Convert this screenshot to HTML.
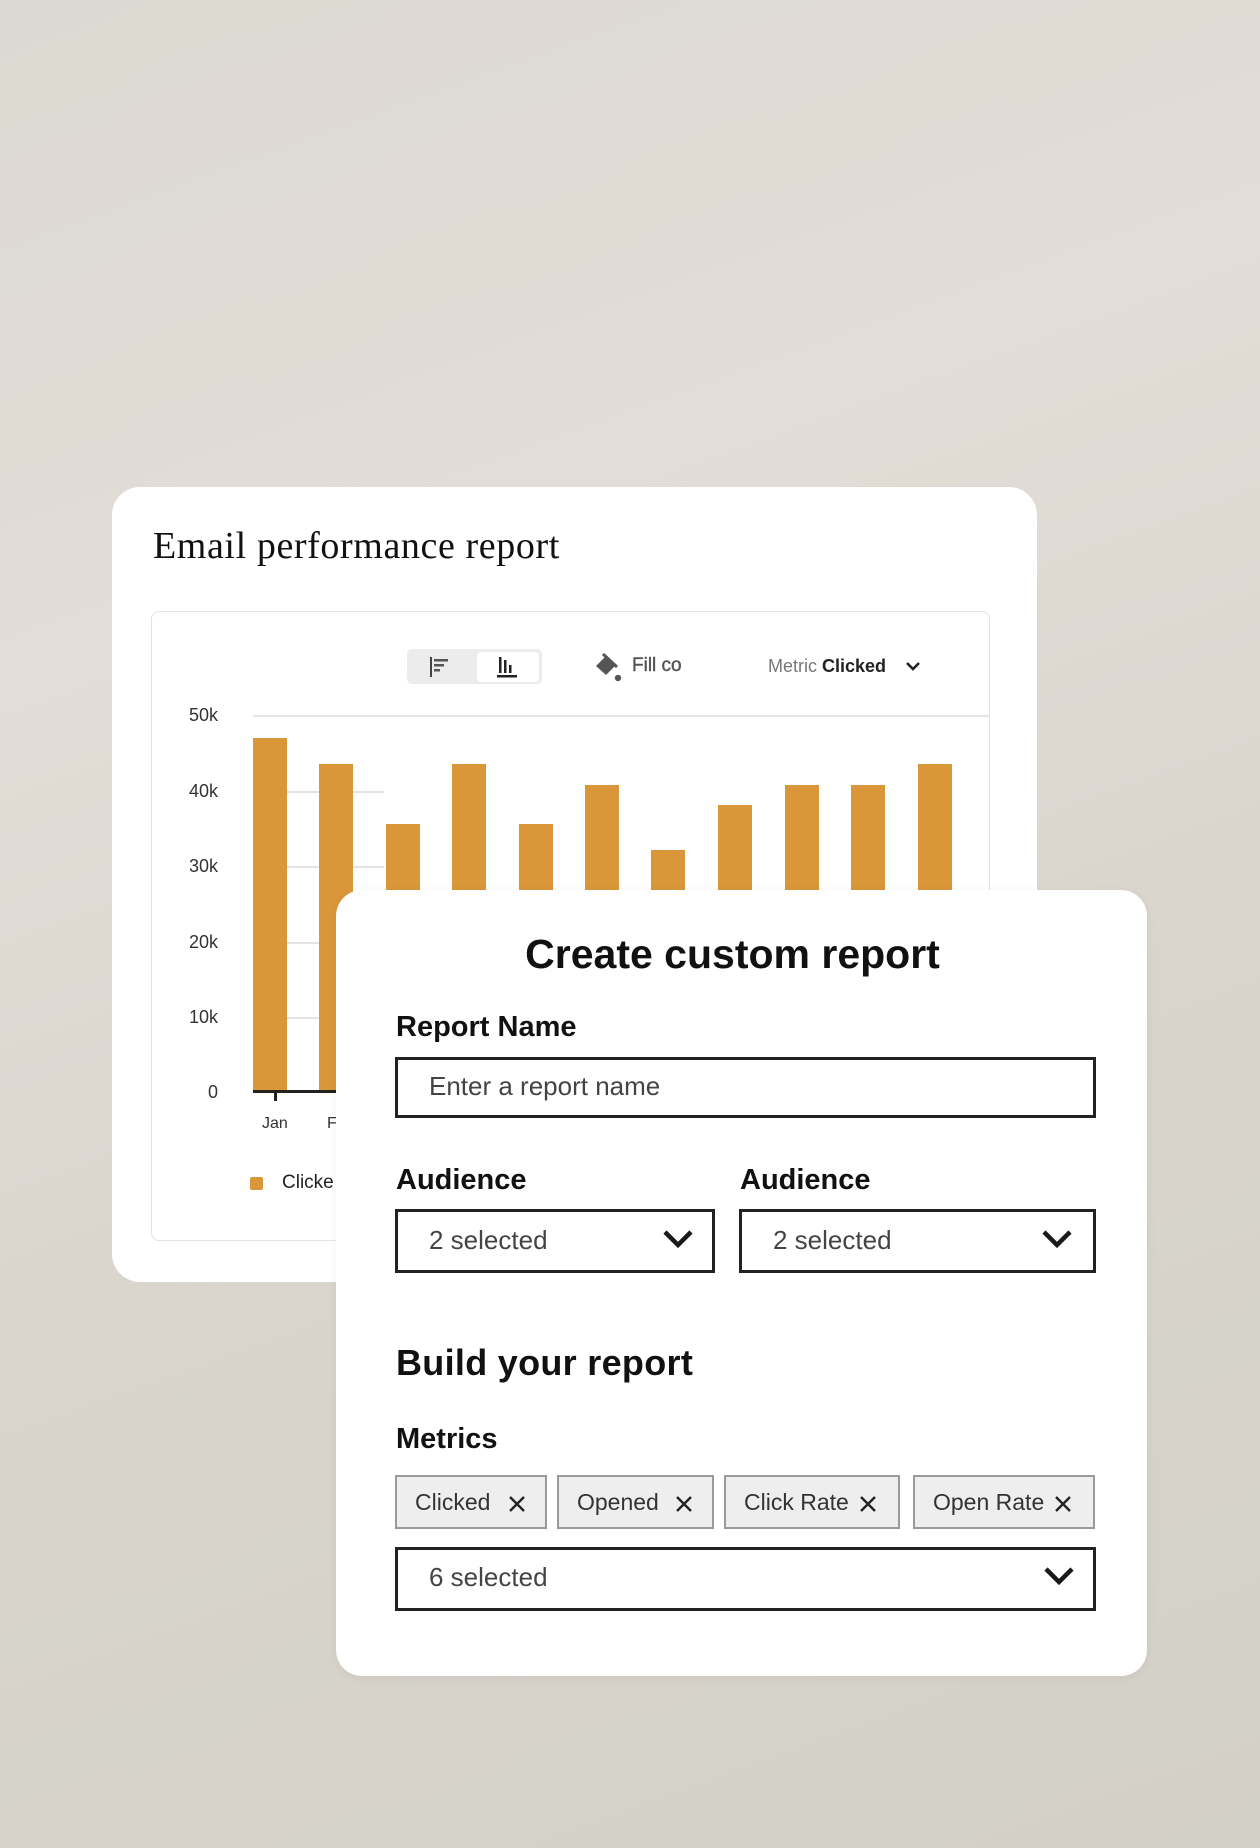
<!DOCTYPE html>
<html><head><meta charset="utf-8">
<style>
*{margin:0;padding:0;box-sizing:border-box}
html,body{width:1260px;height:1848px;overflow:hidden}
body{position:relative;font-family:"Liberation Sans",sans-serif;background:linear-gradient(160deg,#dcd9d2 0%,#e2ddd6 30%,#d9d5cd 60%,#d3d0c7 100%);color:#111}
.a{position:absolute}
.card1{left:112px;top:487px;width:925px;height:795px;background:#fff;border-radius:28px}
.inner{left:151px;top:611px;width:839px;height:630px;border:1.5px solid #e2e2e2;border-radius:8px}
.grid{height:1.5px;background:#e4e4e4}
.bar{background:#d9973a;width:34px}
.yl{font-size:18px;color:#333;width:40px;text-align:right;left:178px}
.card2{left:336px;top:890px;width:811px;height:786px;background:#fff;border-radius:26px;box-shadow:0 2px 10px rgba(0,0,0,.05)}
.lbl{font-weight:bold;font-size:29px;color:#111}
.box{border:3px solid #222;background:#fff}
.ph{font-size:26px;color:#444}
.chip{top:1475px;height:54px;background:#eeeeee;border:2px solid #9a9a9a;font-size:23px;color:#333;line-height:50px;padding-left:18px}
.chip svg{position:absolute;top:17px}
</style></head><body>
<div class="a card1"></div>
<div class="a" style="left:153px;top:524px;font-family:'Liberation Serif',serif;font-size:38px;letter-spacing:0.6px;color:#111">Email performance report</div>
<div class="a inner"></div>
<!-- toolbar -->
<div class="a" style="left:407px;top:649px;width:135px;height:35px;background:#ececec;border-radius:5px"></div>
<div class="a" style="left:477px;top:652px;width:62px;height:30px;background:#fff;border-radius:4px"></div>
<svg class="a" style="left:428px;top:656px" width="24" height="22"><rect x="2" y="1" width="2" height="20" fill="#444"/><rect x="6" y="3" width="14" height="2.5" fill="#555"/><rect x="6" y="8" width="10" height="2.5" fill="#555"/><rect x="6" y="13" width="6" height="2.5" fill="#555"/></svg>
<svg class="a" style="left:496px;top:655px" width="26" height="24"><rect x="3" y="2" width="2.5" height="16" fill="#222"/><rect x="8" y="5" width="2.5" height="13" fill="#222"/><rect x="13" y="10" width="2.5" height="8" fill="#222"/><rect x="1" y="20" width="20" height="2.5" fill="#222"/></svg>
<svg class="a" style="left:592px;top:651px" width="32" height="32"><path d="M4 15 L13 6 L23 15 L14 24 Z" fill="#555"/><path d="M11 3 L25 16" stroke="#555" stroke-width="3"/><circle cx="26" cy="27" r="3.2" fill="#555"/></svg>
<div class="a" style="left:632px;top:655px;font-size:19px;color:#555;-webkit-text-stroke:0.4px #555">Fill co</div>
<div class="a" style="left:768px;top:656px;font-size:18px;color:#777">Metric <b style="color:#222">Clicked</b></div>
<svg class="a" style="left:905px;top:661px" width="16" height="12"><path d="M2 2 L8 8 L14 2" stroke="#222" stroke-width="2.6" fill="none"/></svg>
<!-- grid -->
<div class="a grid" style="left:253px;top:715px;width:736px"></div>
<div class="a grid" style="left:253px;top:791px;width:131px"></div>
<div class="a grid" style="left:253px;top:866px;width:131px"></div>
<div class="a grid" style="left:253px;top:942px;width:131px"></div>
<div class="a grid" style="left:253px;top:1017px;width:131px"></div>
<div class="a yl" style="top:705px">50k</div>
<div class="a yl" style="top:781px">40k</div>
<div class="a yl" style="top:856px">30k</div>
<div class="a yl" style="top:932px">20k</div>
<div class="a yl" style="top:1007px">10k</div>
<div class="a yl" style="top:1082px">0</div>
<div class="a bar" style="left:253px;top:738px;height:353px"></div>
<div class="a bar" style="left:319px;top:764px;height:327px"></div>
<div class="a bar" style="left:386px;top:824px;height:267px"></div>
<div class="a bar" style="left:452px;top:764px;height:327px"></div>
<div class="a bar" style="left:519px;top:824px;height:267px"></div>
<div class="a bar" style="left:585px;top:785px;height:306px"></div>
<div class="a bar" style="left:651px;top:850px;height:241px"></div>
<div class="a bar" style="left:718px;top:805px;height:286px"></div>
<div class="a bar" style="left:785px;top:785px;height:306px"></div>
<div class="a bar" style="left:851px;top:785px;height:306px"></div>
<div class="a bar" style="left:918px;top:764px;height:327px"></div>
<div class="a" style="left:253px;top:1090px;width:100px;height:3px;background:#222"></div>
<div class="a" style="left:274px;top:1092px;width:2.5px;height:9px;background:#222"></div>
<div class="a" style="left:262px;top:1115px;font-size:16px;color:#333">Jan</div>
<div class="a" style="left:327px;top:1115px;font-size:16px;color:#333">F</div>
<div class="a" style="left:250px;top:1177px;width:13px;height:13px;background:#d9973a;border-radius:2px"></div>
<div class="a" style="left:282px;top:1172px;font-size:19px;color:#222">Clicke</div>

<!-- card 2 -->
<div class="a card2"></div>
<div class="a" style="left:336px;top:931px;width:793px;text-align:center;font-size:41px;font-weight:bold;color:#111">Create custom report</div>
<div class="a lbl" style="left:396px;top:1011px">Report Name</div>
<div class="a box" style="left:395px;top:1057px;width:701px;height:61px"></div>
<div class="a ph" style="left:429px;top:1071px">Enter a report name</div>
<div class="a lbl" style="left:396px;top:1164px">Audience</div>
<div class="a lbl" style="left:740px;top:1164px">Audience</div>
<div class="a box" style="left:395px;top:1209px;width:320px;height:64px"></div>
<div class="a box" style="left:739px;top:1209px;width:357px;height:64px"></div>
<div class="a ph" style="left:429px;top:1225px">2 selected</div>
<div class="a ph" style="left:773px;top:1225px">2 selected</div>
<svg class="a" style="left:662px;top:1228px" width="32" height="22"><path d="M3 4 L16 17 L29 4" stroke="#1a1a1a" stroke-width="4.5" fill="none"/></svg>
<svg class="a" style="left:1041px;top:1228px" width="32" height="22"><path d="M3 4 L16 17 L29 4" stroke="#1a1a1a" stroke-width="4.5" fill="none"/></svg>
<div class="a" style="left:396px;top:1342px;font-size:36px;font-weight:bold;color:#111;letter-spacing:0.3px">Build your report</div>
<div class="a lbl" style="left:396px;top:1423px">Metrics</div>
<div class="a chip" style="left:395px;width:152px">Clicked<svg style="left:110px" width="20" height="20"><path d="M3 3 L17 17 M17 3 L3 17" stroke="#222" stroke-width="2.4"/></svg></div>
<div class="a chip" style="left:557px;width:157px">Opened<svg style="left:115px" width="20" height="20"><path d="M3 3 L17 17 M17 3 L3 17" stroke="#222" stroke-width="2.4"/></svg></div>
<div class="a chip" style="left:724px;width:176px">Click Rate<svg style="left:132px" width="20" height="20"><path d="M3 3 L17 17 M17 3 L3 17" stroke="#222" stroke-width="2.4"/></svg></div>
<div class="a chip" style="left:913px;width:182px">Open Rate<svg style="left:138px" width="20" height="20"><path d="M3 3 L17 17 M17 3 L3 17" stroke="#222" stroke-width="2.4"/></svg></div>
<div class="a box" style="left:395px;top:1547px;width:701px;height:64px"></div>
<div class="a ph" style="left:429px;top:1562px">6 selected</div>
<svg class="a" style="left:1043px;top:1565px" width="32" height="22"><path d="M3 4 L16 17 L29 4" stroke="#1a1a1a" stroke-width="4.5" fill="none"/></svg>
</body></html>
